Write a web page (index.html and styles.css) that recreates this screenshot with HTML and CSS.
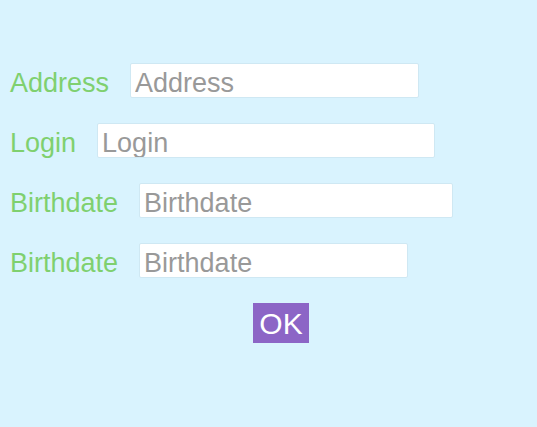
FILE: index.html
```html
<!DOCTYPE html>
<html>
<head>
<meta charset="utf-8">
<link rel="stylesheet" href="styles.css">
</head>
<body>
<form class="form">
  <div class="row">
    <label class="label">Address</label>
    <input class="field field-address" placeholder="Address">
  </div>
  <div class="row">
    <label class="label">Login</label>
    <input class="field field-login" placeholder="Login">
  </div>
  <div class="row">
    <label class="label">Birthdate</label>
    <input class="field field-birth1" placeholder="Birthdate">
  </div>
  <div class="row">
    <label class="label">Birthdate</label>
    <input class="field field-birth2" placeholder="Birthdate">
  </div>
  <div class="actions">
    <button type="button" class="ok">OK</button>
  </div>
</form>
</body>
</html>
```
FILE: styles.css
```css
html, body {
  margin: 0;
  padding: 0;
  background: #d9f3fe;
  height: 100%;
}
body {
  font-family: "Liberation Sans", Arial, sans-serif;
}
.form {
  padding: 63px 0 0 10px;
  display: flex;
  flex-direction: column;
  gap: 25px;
}
.row {
  display: flex;
  align-items: center;
  gap: 21px;
  height: 35px;
}
.label {
  color: #7fd06f;
  font-size: 27px;
  padding-top: 6px;
}
.field {
  box-sizing: border-box;
  height: 35px;
  border: 1px solid #cfe8f3;
  border-radius: 2px;
  background: #fff;
  padding: 6px 4px 0;
  font-family: "Liberation Sans", Arial, sans-serif;
  font-size: 27px;
  color: #333;
  outline: none;
}
.field::placeholder {
  color: #999999;
}
.field-address { width: 289px; }
.field-login { width: 338px; }
.field-birth1 { width: 314px; }
.field-birth2 { width: 269px; }
.actions {
  padding-left: 243px;
}
.ok {
  width: 56px;
  height: 40px;
  border: none;
  padding: 2px 0 0;
  background: #8c65c6;
  color: #fff;
  font-family: "Liberation Sans", Arial, sans-serif;
  font-size: 30px;
}
```
